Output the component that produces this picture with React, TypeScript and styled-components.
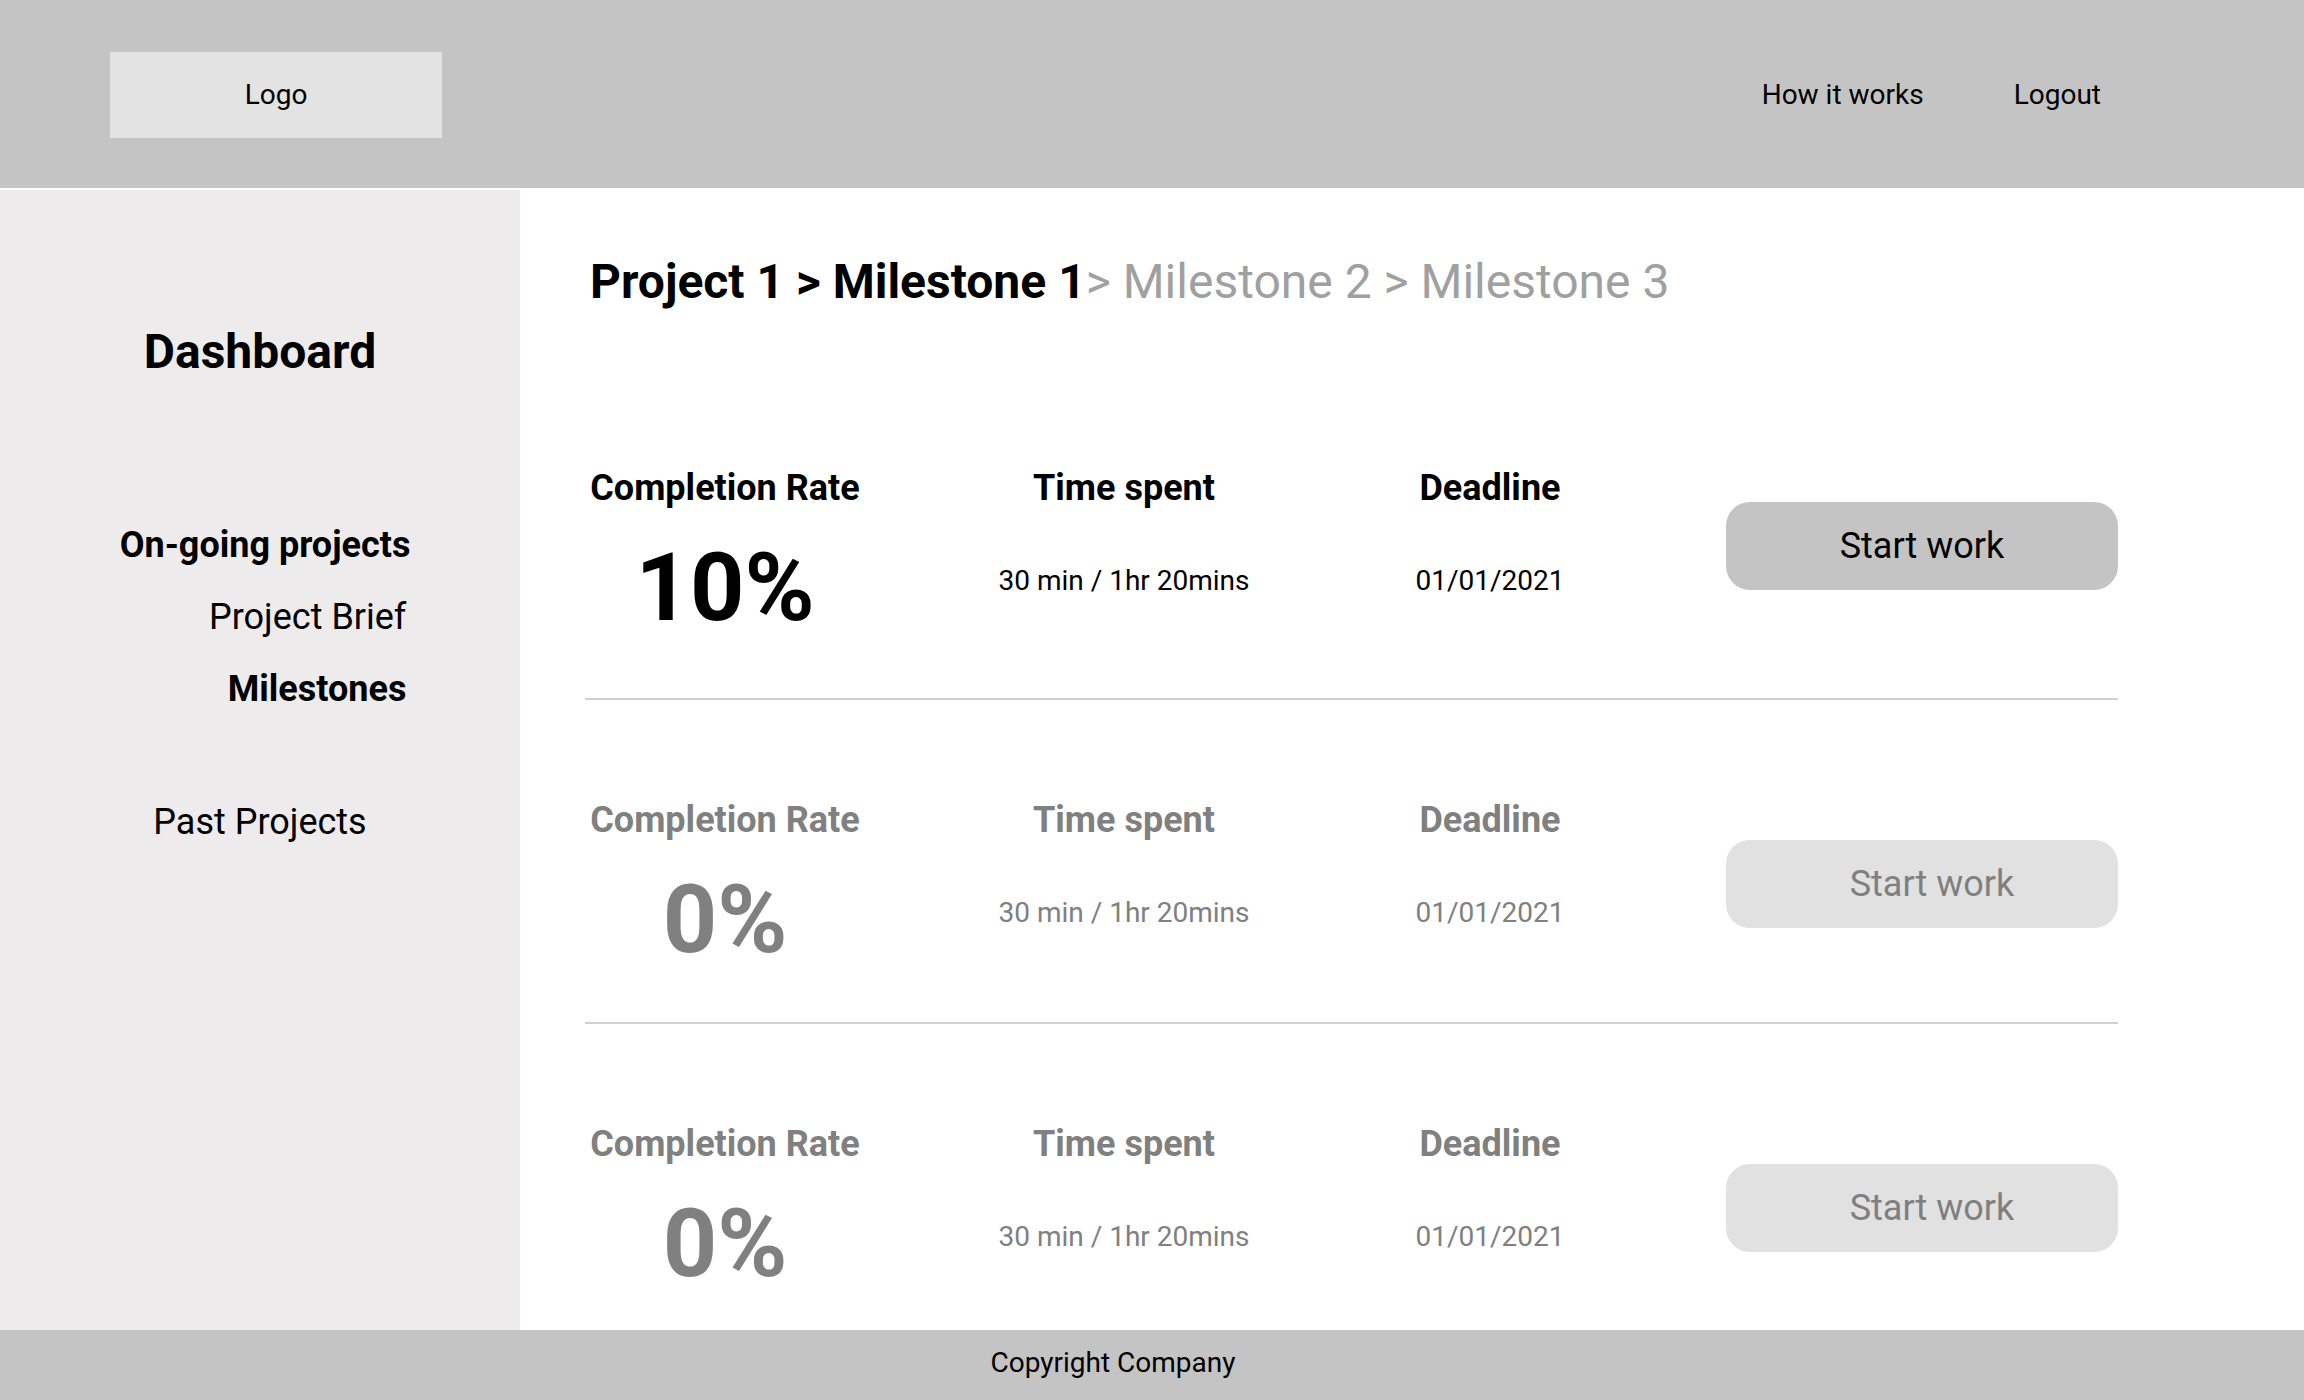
import React from "react";
import styled, { createGlobalStyle } from "styled-components";

const GlobalStyle = createGlobalStyle`
  html, body {
    margin: 0;
    padding: 0;
    background: #ffffff;
    font-family: Roboto, "Liberation Sans", Arial, sans-serif;
    color: #000000;
  }
  #root {
    height: 100vh;
  }
  * {
    box-sizing: border-box;
  }
`;

const Page = styled.div`
  display: flex;
  flex-direction: column;
  height: 100vh;
  width: 100%;
  overflow: hidden;
`;

const Header = styled.header`
  flex: 0 0 188px;
  height: 188px;
  background: #c4c4c4;
  display: flex;
  align-items: center;
  justify-content: space-between;
  padding: 2px 203px 0 110px;
`;

const LogoBox = styled.div`
  width: 332px;
  height: 86px;
  background: #e3e3e3;
  display: flex;
  align-items: center;
  justify-content: center;
  font-size: 28px;
  line-height: 36px;
`;

const Nav = styled.nav`
  display: flex;
  align-items: center;
  gap: 90px;
`;

const NavLink = styled.span`
  font-size: 28px;
  line-height: 36px;
  color: #000;
`;

const Body = styled.div`
  flex: 1 1 auto;
  min-height: 0;
  display: flex;
  margin-top: 2px;
`;

const Sidebar = styled.aside`
  flex: 0 0 520px;
  width: 520px;
  background: #edebec;
  display: flex;
  flex-direction: column;
  align-items: center;
  padding-top: 134px;
`;

const SideTitle = styled.h1`
  margin: 0;
  font-size: 48px;
  line-height: 56px;
  font-weight: 700;
`;

const SubNav = styled.div`
  display: flex;
  flex-direction: column;
  align-items: flex-end;
  gap: 24px;
  margin-top: 141px;
  margin-left: 10px;
`;

const SideItem = styled.div<{ $bold?: boolean; $gap?: number; $inset?: number }>`
  font-size: 36px;
  line-height: 48px;
  font-weight: ${(p) => (p.$bold ? 700 : 400)};
  margin-top: ${(p) => p.$gap ?? 0}px;
  margin-right: ${(p) => p.$inset ?? 0}px;
  white-space: nowrap;
`;

const Main = styled.main`
  flex: 1 1 auto;
  min-width: 0;
  padding: 64px 0 0 65px;
  overflow: hidden;
`;

const Breadcrumb = styled.div`
  margin-left: 5px;
  font-size: 48px;
  line-height: 56px;
  white-space: nowrap;
`;

const Crumb = styled.span<{ $current?: boolean }>`
  font-weight: ${(p) => (p.$current ? 700 : 400)};
  color: ${(p) => (p.$current ? "#000000" : "#a0a0a0")};
`;

const Rows = styled.div`
  width: 1533px;
  margin-top: 58px;
`;

const Row = styled.section<{ $active: boolean }>`
  display: grid;
  grid-template-columns: 272px 526px 206px 1fr;
  align-items: start;
  padding: 98px 0 ${(p) => (p.$active ? 60 : 52)}px 4px;
  border-bottom: 2px solid #d0d0d0;

  &:last-child {
    border-bottom: none;
    padding-bottom: 0;
  }
`;

const Cell = styled.div`
  display: flex;
  flex-direction: column;
  align-items: center;
`;

const Label = styled.div<{ $active: boolean }>`
  font-size: 36px;
  line-height: 44px;
  font-weight: 700;
  white-space: nowrap;
  color: ${(p) => (p.$active ? "#000000" : "#808080")};
`;

const Value = styled.div<{ $active: boolean }>`
  margin-top: 51px;
  font-size: 28px;
  line-height: 40px;
  white-space: nowrap;
  color: ${(p) => (p.$active ? "#000000" : "#808080")};
`;

const BigValue = styled.div<{ $active: boolean }>`
  margin-top: 28px;
  font-size: 95px;
  line-height: 100px;
  font-weight: 700;
  white-space: nowrap;
  color: ${(p) => (p.$active ? "#000000" : "#808080")};
`;

const StartButton = styled.button<{ $active: boolean }>`
  justify-self: end;
  width: 392px;
  height: 88px;
  margin-top: ${(p) => (p.$active ? 36 : 42)}px;
  padding: 0 0 0 ${(p) => (p.$active ? 0 : 20)}px;
  border: none;
  border-radius: 24px;
  background: ${(p) => (p.$active ? "#c4c4c4" : "#e1e1e1")};
  color: ${(p) => (p.$active ? "#000000" : "#7f7f7f")};
  font-family: Roboto, "Liberation Sans", Arial, sans-serif;
  font-size: 36px;
  line-height: 44px;
  cursor: pointer;
`;

const Footer = styled.footer`
  flex: 0 0 70px;
  height: 70px;
  background: #c4c4c4;
  display: flex;
  align-items: center;
  justify-content: center;
  padding: 0 78px 5px 0;
  font-size: 28px;
  line-height: 36px;
`;

type Milestone = {
  rate: string;
  spent: string;
  deadline: string;
  active: boolean;
};

const milestones: Milestone[] = [
  { rate: "10%", spent: "30 min / 1hr 20mins", deadline: "01/01/2021", active: true },
  { rate: "0%", spent: "30 min / 1hr 20mins", deadline: "01/01/2021", active: false },
  { rate: "0%", spent: "30 min / 1hr 20mins", deadline: "01/01/2021", active: false },
];

export default function App() {
  return (
    <>
      <GlobalStyle />
      <Page>
        <Header>
          <LogoBox>Logo</LogoBox>
          <Nav>
            <NavLink>How it works</NavLink>
            <NavLink>Logout</NavLink>
          </Nav>
        </Header>
        <Body>
          <Sidebar>
            <SideTitle>Dashboard</SideTitle>
            <SubNav>
              <SideItem $bold>On-going projects</SideItem>
              <SideItem $inset={4}>Project Brief</SideItem>
              <SideItem $bold $inset={4}>Milestones</SideItem>
            </SubNav>
            <SideItem $gap={85}>Past Projects</SideItem>
          </Sidebar>
          <Main>
            <Breadcrumb>
              <Crumb $current>Project 1 &gt; Milestone 1</Crumb>
              <Crumb>&gt; Milestone 2 &gt; Milestone 3</Crumb>
            </Breadcrumb>
            <Rows>
              {milestones.map((m, i) => (
                <Row key={i} $active={m.active}>
                  <Cell>
                    <Label $active={m.active}>Completion Rate</Label>
                    <BigValue $active={m.active}>{m.rate}</BigValue>
                  </Cell>
                  <Cell>
                    <Label $active={m.active}>Time spent</Label>
                    <Value $active={m.active}>{m.spent}</Value>
                  </Cell>
                  <Cell>
                    <Label $active={m.active}>Deadline</Label>
                    <Value $active={m.active}>{m.deadline}</Value>
                  </Cell>
                  <StartButton $active={m.active}>Start work</StartButton>
                </Row>
              ))}
            </Rows>
          </Main>
        </Body>
        <Footer>Copyright Company</Footer>
      </Page>
    </>
  );
}
